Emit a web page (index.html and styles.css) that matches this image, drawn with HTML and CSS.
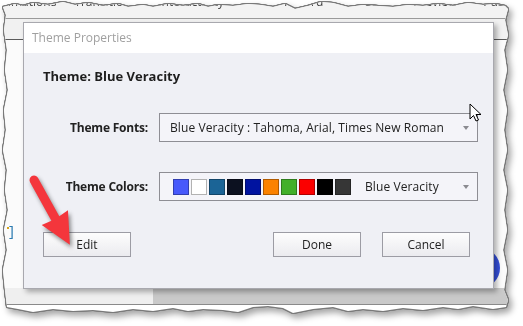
FILE: index.html
```html
<!DOCTYPE html>
<html lang="en">
<head>
    <meta charset="UTF-8">
    <title>Theme Properties</title>
    <link rel="stylesheet" href="styles.css">
</head>
<body>
    <div class="shot">
        <div class="screen">
            <div class="toolbar">
                <span class="tb tb-anim">Animations</span>
                <span class="tb tb-trans">Transitions</span>
                <span class="tb tb-inter">Interactivity</span>
                <span class="tb tb-rec">Record</span>
                <span class="tb-sep"></span>
                <span class="tb tb-save">Save</span>
                <span class="tb tb-prev">Preview</span>
                <span class="tb tb-more">Publish</span>
            </div>
            <div class="ribbon"></div>
            <div class="content">
                <div class="bracket"><i class="dot"></i>]</div>
                <div class="fab"></div>
            </div>
            <div class="statusbar">
                <div class="status-left"></div>
                <div class="status-right"></div>
            </div>

            <!-- dialog window over the app -->
            <div class="dialog">
                <div class="dialog-title">Theme Properties</div>
                <div class="dialog-body">
                    <h2 class="theme-name">Theme: Blue Veracity</h2>

                    <div class="row">
                        <label class="row-label">Theme Fonts:</label>
                        <div class="dropdown">
                            <span class="dd-text">Blue Veracity : Tahoma, Arial, Times New Roman</span>
                            <span class="caret"></span>
                        </div>
                    </div>

                    <div class="row row-colors">
                        <label class="row-label">Theme Colors:</label>
                        <div class="dropdown">
                            <div class="swatches">
                                <span class="sw" style="background:#4759fb"></span>
                                <span class="sw" style="background:#ffffff"></span>
                                <span class="sw" style="background:#1b6496"></span>
                                <span class="sw" style="background:#0c1120"></span>
                                <span class="sw" style="background:#0013a0"></span>
                                <span class="sw" style="background:#fb8200"></span>
                                <span class="sw" style="background:#42b02a"></span>
                                <span class="sw" style="background:#fb0000"></span>
                                <span class="sw" style="background:#000000"></span>
                                <span class="sw" style="background:#363636"></span>
                            </div>
                            <span class="dd-text dd-scheme">Blue Veracity</span>
                            <span class="caret"></span>
                        </div>
                    </div>

                    <div class="buttons">
                        <button class="btn">Edit</button>
                        <span class="spacer"></span>
                        <button class="btn">Done</button>
                        <button class="btn">Cancel</button>
                    </div>
                </div>
            </div>

            <svg class="cursor" width="14" height="20" viewBox="0 0 14 20">
                <path d="M1 1 L1 16 L4.5 12.5 L7 18 L9.5 17 L7 11.5 L12 11.5 Z" fill="#fff" stroke="#000" stroke-width="1" stroke-linejoin="round"/>
            </svg>
        </div>

        <svg class="pointer" width="100" height="100" viewBox="0 0 100 100">
            <g transform="translate(14 14) rotate(61)">
                <path d="M0 -4.5 L44 -4.5 L43 -15 L74 0 L43 15 L44 4.5 L0 4.5 A4.5 4.5 0 0 1 0 -4.5 Z" fill="#f4363c"/>
            </g>
        </svg>
    </div>
</body>
</html>
```

FILE: styles.css
```css
body {
    margin: 0;
    background-color: #ffffff;
    font-family: 'Open Sans', 'Noto Sans', sans-serif;
    width: 523px;
    height: 326px;
    overflow: hidden;
}
.shot {
    position: relative;
    margin-left: 3px;
    width: 506px;
    filter: drop-shadow(1px 0 0 #7a7a7a) drop-shadow(-1px 0 0 #7a7a7a) drop-shadow(0 1px 0 #7a7a7a) drop-shadow(0 -1px 0 #7a7a7a) drop-shadow(3px 4px 3px rgba(0, 0, 0, 0.35));
}
.screen {
    position: relative;
    height: 314px;
    background-color: #ffffff;
    display: flex;
    flex-direction: column;
    clip-path: polygon(0px 7px, 12px 4px, 20px 6px, 30px 3px, 45px 5px, 60px 2px, 72px 5px, 85px 3px, 100px 6px, 115px 4px, 125px 7px, 140px 5px, 150px 7px, 165px 4px, 180px 6px, 195px 4px, 205px 7px, 215px 5px, 230px 6px, 245px 4px, 258px 5px, 270px 7px, 282px 4px, 292px 9px, 305px 6px, 318px 2px, 330px 3px, 345px 7px, 360px 5px, 375px 6px, 390px 7px, 405px 5px, 420px 6px, 435px 4px, 450px 6px, 465px 3px, 480px 5px, 492px 4px, 502px 6px, 505px 9px,
        502px 20px, 505px 35px, 501px 50px, 504px 70px, 500px 90px, 504px 110px, 501px 130px, 504px 150px, 500px 170px, 504px 190px, 501px 210px, 504px 230px, 500px 250px, 504px 270px, 501px 290px, 505px 300px, 503px 307px,
        490px 309px, 470px 306px, 455px 309px, 440px 307px, 420px 310px, 400px 308px, 380px 311px, 360px 309px, 345px 311px, 330px 307px, 310px 309px, 290px 313px, 280px 308px, 265px 306px, 250px 307px, 235px 312px, 220px 310px, 200px 309px, 185px 311px, 170px 308px, 150px 311px, 130px 309px, 110px 312px, 90px 310px, 70px 311px, 50px 309px, 30px 312px, 15px 309px, 4px 307px,
        2px 290px, 0px 270px, 4px 250px, 1px 230px, 5px 210px, 2px 190px, 4px 170px, 0px 150px, 3px 130px, 1px 110px, 5px 90px, 2px 70px, 4px 50px, 1px 30px, 3px 15px);
}

/* app behind the dialog */
.toolbar {
    height: 18px;
    background-color: #f3f3f3;
    border-bottom: 1px solid #9a9a9a;
    display: flex;
    align-items: flex-start;
    font-size: 12px;
    line-height: 16px;
    color: #444;
    overflow: hidden;
}
.tb {
    margin-top: -6px;
    white-space: nowrap;
}
.tb-anim { margin-left: -10px; }
.tb-trans { margin-left: 18px; }
.tb-inter { margin-left: 22px; }
.tb-rec { margin-left: 60px; }
.tb-sep {
    width: 1px;
    height: 9px;
    margin: 5px 0 0 20px;
    background-color: #c8c8c8;
}
.tb-save { margin-left: 22px; }
.tb-prev { margin-left: 22px; }
.tb-more { margin-left: 26px; }
.ribbon {
    height: 20px;
    background-color: #f1f1f1;
    border-bottom: 1px solid #5a5a5a;
}
.content {
    position: relative;
    z-index: 0;
    height: 248px;
    background-color: #fbfbfb;
}
.bracket {
    position: relative;
    margin: 182px 0 0 6px;
    font-size: 15px;
    color: #2a7ab0;
    line-height: 16px;
}
.dot {
    position: absolute;
    left: -2px;
    top: 5px;
    width: 2px;
    height: 2px;
    background-color: #d6a21a;
}
.fab {
    position: absolute;
    left: 457px;
    top: 208px;
    width: 40px;
    height: 40px;
    border-radius: 50%;
    background-color: #3550dc;
}
.statusbar {
    height: 16px;
    display: flex;
    border-bottom: 1px solid #8a8a8a;
}
.status-left {
    width: 150px;
    background-color: #efefef;
}
.status-right {
    flex: 1;
    background-color: #c9c9c9;
}

/* dialog */
.dialog {
    position: absolute;
    z-index: 2;
    left: 20px;
    top: 22px;
    width: 471px;
    height: 267px;
    background-color: #eff0f5;
    border: 1px solid #a8a8ae;
    box-shadow: 3px 3px 5px rgba(0, 0, 0, 0.3);
    box-sizing: border-box;
    display: flex;
    flex-direction: column;
}
.dialog-title {
    height: 30px;
    background-color: #ffffff;
    padding-left: 8px;
    font-size: 12px;
    line-height: 30px;
    color: #a0a0a0;
}
.dialog-body {
    padding: 14px 15px 0 0;
}
.theme-name {
    margin: 0 0 28px 19px;
    font-size: 13px;
    line-height: 18px;
    font-weight: bold;
    color: #1e1e1e;
}
.row {
    display: flex;
    align-items: center;
}
.row-colors {
    margin-top: 30px;
}
.row-label {
    width: 124px;
    margin-right: 11px;
    text-align: right;
    font-size: 12px;
    font-weight: bold;
    letter-spacing: -0.2px;
    color: #222;
}
.dropdown {
    flex: 1;
    height: 29px;
    box-sizing: border-box;
    border: 1px solid #8e8e94;
    background-color: #f4f4f9;
    display: flex;
    align-items: center;
    padding-left: 10px;
}
.dd-text {
    font-size: 12px;
    letter-spacing: 0.1px;
    color: #222;
    white-space: nowrap;
}
.swatches {
    display: flex;
    gap: 2px;
    margin-left: 3px;
}
.sw {
    width: 16px;
    height: 16px;
    box-sizing: border-box;
    border: 1px solid rgba(0, 0, 0, 0.3);
}
.dd-scheme {
    margin-left: 14px;
}
.caret {
    margin-left: auto;
    margin-right: 8px;
    width: 0;
    height: 0;
    border-left: 3.5px solid transparent;
    border-right: 3.5px solid transparent;
    border-top: 4px solid #8a8a90;
}
.buttons {
    display: flex;
    gap: 21px;
    margin: 31px 8px 0 19px;
}
.spacer {
    flex: 1;
}
.btn {
    width: 88px;
    height: 25px;
    font-family: inherit;
    font-size: 12px;
    color: #222;
    background: linear-gradient(#fdfdfd, #ebebef);
    border: 1px solid #9c9ca4;
    padding: 0;
}

/* overlays */
.cursor {
    position: absolute;
    z-index: 3;
    left: 466px;
    top: 103px;
}
.pointer {
    position: absolute;
    left: 17px;
    top: 166px;
    filter: drop-shadow(2px 3px 2px rgba(0, 0, 0, 0.45));
}
```
